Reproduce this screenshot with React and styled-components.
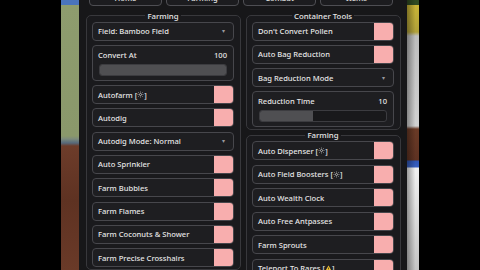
import React from 'react'
import styled, { createGlobalStyle } from 'styled-components'

const Global = createGlobalStyle`
  html, body {
    margin: 0;
    background: #000;
    width: 480px;
    height: 270px;
    overflow: hidden;
  }
  * { box-sizing: border-box; }
`

const Screen = styled.div`
  display: flex;
  width: 480px;
  height: 270px;
  background: #000;
  font-family: "Noto Sans", "Liberation Sans", sans-serif;
  font-size: 7.6px;
  font-weight: 500;
  color: #e6e6e6;
`

const Bar = styled.div`
  width: ${p => p.$w}px;
  flex: none;
  background: #000;
`

const LeftScene = styled.div`
  width: 18px;
  flex: none;
  background: linear-gradient(
    to bottom,
    #4a74bd 0, #4a74bd 5px,
    #8e9c6e 5px, #8a986b 136px,
    #7c8a7c 139px, #56687a 143px,
    #6d3c2a 146px, #5e3222 200px, #6a3a28 270px
  );
`

const RightScene = styled.div`
  width: 12px;
  flex: none;
  background:
    linear-gradient(to right, rgba(0,0,0,0.35), rgba(0,0,0,0) 70%),
    linear-gradient(
      to bottom,
      #2f4a22 0, #2f4a22 5px,
      #c8b436 5px, #b0a03a 32px,
      #bdbdbd 36px, #d0d0d0 126px,
      #6a3a26 129px, #5e3222 160px,
      #2f56b5 161px, #3a60c0 167px,
      #f0f0f0 168px, #c4c4c4 270px
    );
`

const Panel = styled.div`
  width: 328px;
  flex: none;
  background: #171719;
  padding: 0 6px 0 7px;
  display: flex;
  flex-direction: column;
  overflow: hidden;
`

const Tabs = styled.div`
  display: flex;
  gap: 4px;
  margin-top: -10px;
  padding-left: 3px;
  height: 16px;
  flex: none;
`

const Tab = styled.div`
  width: 73px;
  flex: none;
  height: 16px;
  border: 1px solid #4e4e53;
  border-radius: 4px;
  background: #1c1c1f;
  display: flex;
  align-items: center;
  justify-content: center;
`

const Columns = styled.div`
  display: grid;
  grid-template-columns: 155px 155px;
  gap: 5px;
  margin-top: 4.5px;
  align-items: start;
`

const Column = styled.div`
  display: flex;
  flex-direction: column;
`

const Section = styled.fieldset`
  margin: 0;
  min-width: 0;
  border: 1px solid #38383c;
  border-radius: 5px;
  background: #1a1a1d;
  padding: 1px 6px 2px 5px;
  display: flex;
  flex-direction: column;
  gap: ${p => p.$gap || 4.3}px;
`

const Legend = styled.legend`
  margin: 0 auto;
  padding: 0 2px;
  line-height: 10px;
  font-size: 7.8px;
  color: #e6e6e6;
`

const Row = styled.div`
  height: 19px;
  flex: none;
  display: flex;
  align-items: center;
  border: 1px solid #47474c;
  border-radius: 4px;
  background: #1e1e21;
  padding-left: 5px;
  overflow: hidden;
`

const Label = styled.span`
  flex: 1;
  white-space: nowrap;
`

const Toggle = styled.div`
  width: 20px;
  align-self: stretch;
  margin: -1px -1px -1px 0;
  background: ${p => (p.$on ? '#7fd47f' : '#f8aeae')};
  border-radius: 0 4px 4px 0;
`

const Caret = styled.span`
  font-size: 6px;
  color: #9a9a9e;
  margin-right: 8px;
`

const SliderBox = styled.div`
  height: 36px;
  flex: none;
  border: 1px solid #47474c;
  border-radius: 4px;
  background: #1e1e21;
  padding: 4px 6px 4px 5px;
  display: flex;
  flex-direction: column;
  gap: 4px;
`

const SliderHead = styled.div`
  display: flex;
  justify-content: space-between;
  line-height: 10px;
`

const Track = styled.div`
  height: 13px;
  margin-left: 1px;
  border: 1px solid #3c3c40;
  border-radius: 3px;
  background: #19191b;
  overflow: hidden;
`

const Fill = styled.div`
  height: 100%;
  background: #4f4f52;
`

const Gear = () => (
  <svg width="7" height="7" viewBox="0 0 24 24" fill="none" stroke="#d8d8d8" strokeWidth="2.4" style={{ verticalAlign: '-0.5px' }}>
    <circle cx="12" cy="12" r="3.5" />
    <path d="M12 2v3M12 19v3M2 12h3M19 12h3M4.9 4.9l2.1 2.1M17 17l2.1 2.1M4.9 19.1L7 17M17 7l2.1-2.1" />
  </svg>
)

const Warn = () => (
  <svg width="7" height="7" viewBox="0 0 24 24" style={{ verticalAlign: '-0.5px' }}>
    <path d="M12 2L23 21H1z" fill="#f2c12e" />
    <path d="M12 9v6M12 17v2" stroke="#222" strokeWidth="2.4" />
  </svg>
)

const Toggler = ({ children }) => (
  <Row>
    <Label>{children}</Label>
    <Toggle />
  </Row>
)

const Dropdown = ({ children }) => (
  <Row>
    <Label>{children}</Label>
    <Caret>▾</Caret>
  </Row>
)

const Slider = ({ label, value, pct }) => (
  <SliderBox>
    <SliderHead>
      <span>{label}</span>
      <span>{value}</span>
    </SliderHead>
    <Track>
      <Fill style={{ width: `${pct}%` }} />
    </Track>
  </SliderBox>
)

export default function App() {
  return (
    <>
      <Global />
      <Screen>
        <Bar $w={61} />
        <LeftScene />
        <Panel>
          <Tabs>
            <Tab>Home</Tab>
            <Tab>Farming</Tab>
            <Tab>Combat</Tab>
            <Tab>Items</Tab>
          </Tabs>
          <Columns>
            <Column>
              <Section>
                <Legend>Farming</Legend>
                <Dropdown>Field: Bamboo Field</Dropdown>
                <Slider label="Convert At" value="100" pct={100} />
                <Toggler>Autofarm [<Gear />]</Toggler>
                <Toggler>Autodig</Toggler>
                <Dropdown>Autodig Mode: Normal</Dropdown>
                <Toggler>Auto Sprinkler</Toggler>
                <Toggler>Farm Bubbles</Toggler>
                <Toggler>Farm Flames</Toggler>
                <Toggler>Farm Coconuts &amp; Shower</Toggler>
                <Toggler>Farm Precise Crosshairs</Toggler>
              </Section>
            </Column>
            <Column>
              <Section>
                <Legend>Container Tools</Legend>
                <Toggler>Don't Convert Pollen</Toggler>
                <Toggler>Auto Bag Reduction</Toggler>
                <Dropdown>Bag Reduction Mode</Dropdown>
                <Slider label="Reduction Time" value="10" pct={42} />
              </Section>
              <Section $gap={4.5}>
                <Legend>Farming</Legend>
                <Toggler>Auto Dispenser [<Gear />]</Toggler>
                <Toggler>Auto Field Boosters [<Gear />]</Toggler>
                <Toggler>Auto Wealth Clock</Toggler>
                <Toggler>Auto Free Antpasses</Toggler>
                <Toggler>Farm Sprouts</Toggler>
                <Toggler>Teleport To Rares [<Warn />]</Toggler>
              </Section>
            </Column>
          </Columns>
        </Panel>
        <RightScene />
        <Bar $w={62} />
      </Screen>
    </>
  )
}
